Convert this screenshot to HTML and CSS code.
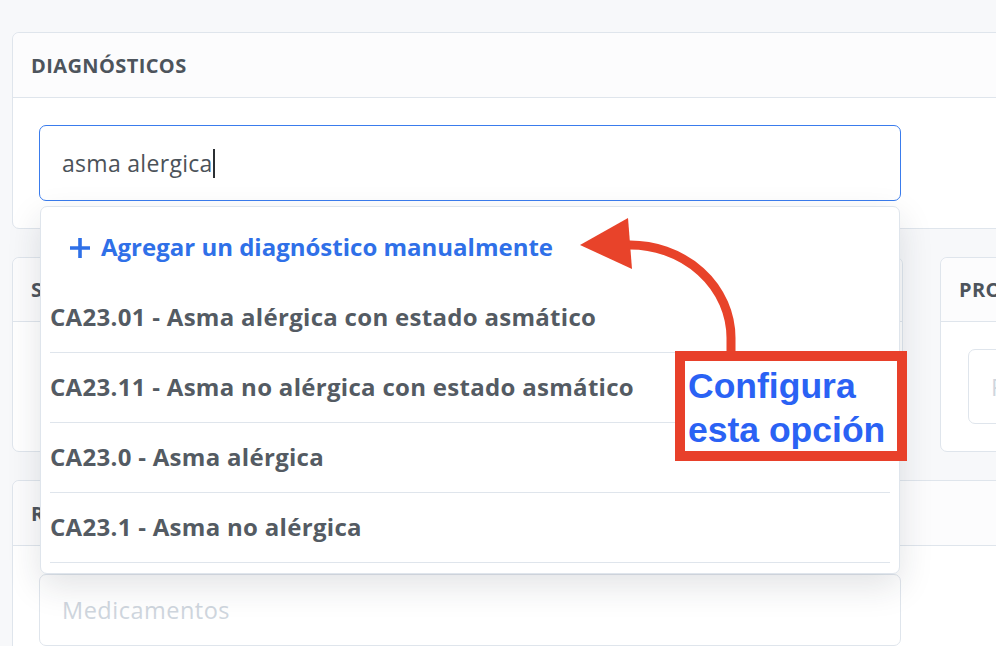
FILE: index.html
```html
<!DOCTYPE html>
<html lang="es">
<head>
<meta charset="utf-8">
<title>Diagnósticos</title>
<link rel="stylesheet" href="styles.css">
</head>
<body>
<div class="page">
  <section class="card card-diag">
    <header class="card-head">DIAGNÓSTICOS</header>
    <div class="card-body">
      <div class="search">
        <div class="field focused"><span class="typed">asma alergica</span><span class="caret"></span></div>
        <div class="dropdown">
          <div class="add-item">
            <svg class="plus" viewBox="0 0 22 22" width="22" height="22"><path d="M11 1V21M1 11H21" stroke="currentColor" stroke-width="3.6" fill="none"/></svg>
            <span>Agregar un diagnóstico manualmente</span>
          </div>
          <ul class="options">
            <li>CA23.01 - Asma alérgica con estado asmático</li>
            <li>CA23.11 - Asma no alérgica con estado asmático</li>
            <li>CA23.0 - Asma alérgica</li>
            <li>CA23.1 - Asma no alérgica</li>
          </ul>
        </div>
      </div>
    </div>
  </section>

  <div class="row-two">
    <section class="card card-sintomas">
      <header class="card-head">SÍNTOMAS</header>
      <div class="card-body"></div>
    </section>
    <section class="card card-proc">
      <header class="card-head">PROCEDIMIENTOS</header>
      <div class="card-body">
        <div class="field placeholder">Procedimientos</div>
      </div>
    </section>
  </div>

  <section class="card card-receta">
    <header class="card-head">RECETA</header>
    <div class="card-body">
      <div class="field area placeholder">Medicamentos</div>
    </div>
  </section>

  <svg class="arrow" viewBox="0 0 996 646" width="996" height="646">
    <path d="M731 352 V338 A101 93 0 0 0 628 245" stroke="#e8432a" stroke-width="9" fill="none"/>
    <polygon points="580,245 628,218 632,269" fill="#e8432a"/>
  </svg>
  <div class="callout">Configura<br>esta opción</div>
</div>
</body>
</html>
```

FILE: styles.css
```css
html, body {
  margin: 0;
  padding: 0;
  background: #f7f8fa;
  overflow: hidden;
}

.page {
  position: relative;
  width: 996px;
  height: 646px;
  overflow: hidden;
  padding: 32px 0 0 12px;
  box-sizing: border-box;
  font-family: "Open Sans", "Noto Sans", sans-serif;
  color: #525961;
}

.card {
  background: #ffffff;
  border: 1px solid #dfe5ec;
  border-radius: 7px;
  box-sizing: border-box;
  width: 1088px;
}

.card-head {
  height: 65px;
  display: flex;
  align-items: center;
  padding-left: 18px;
  background: #fcfcfd;
  border-bottom: 1px solid #dfe5ec;
  border-radius: 7px 7px 0 0;
  box-sizing: border-box;
  font-weight: 700;
  font-size: 20px;
  letter-spacing: 0.4px;
  color: #4d545c;
  white-space: nowrap;
}

.card-diag {
  height: 197px;
}

.card-diag .card-body {
  padding: 27px 26px;
}

.search {
  position: relative;
  width: 862px;
}

.field {
  height: 76px;
  border: 1px solid #dfe5ec;
  border-radius: 7px;
  box-sizing: border-box;
  display: flex;
  align-items: center;
  padding-left: 22px;
  font-size: 23px;
  letter-spacing: 0.3px;
  background: #ffffff;
  white-space: nowrap;
}

.field.focused {
  border-color: #3a7ced;
  color: #4b5259;
}

.caret {
  display: inline-block;
  width: 2px;
  height: 29px;
  background: #2b2f33;
  margin-left: 0;
}

.placeholder {
  color: #cfd6de;
  letter-spacing: 0.5px;
  font-size: 23.5px;
}

.dropdown {
  position: absolute;
  z-index: 10;
  top: calc(100% + 5px);
  left: 1px;
  right: 1px;
  background: #ffffff;
  border: 1px solid #dfe5ec;
  border-radius: 7px;
  box-shadow: 0 12px 34px rgba(30, 40, 55, 0.13);
  padding: 0 9px 10px 9px;
}

.add-item {
  height: 76px;
  display: flex;
  align-items: center;
  gap: 10px;
  padding: 3px 0 0 19px;
  box-sizing: border-box;
  color: #2f70e8;
  font-weight: 700;
  font-size: 24px;
}

.plus {
  flex: none;
  margin-top: 2px;
}

.options {
  list-style: none;
  margin: 0;
  padding: 0;
}

.options li {
  height: 70px;
  display: flex;
  align-items: center;
  border-bottom: 1px solid #dfe5ec;
  box-sizing: border-box;
  padding-bottom: 3px;
  font-weight: 700;
  font-size: 24px;
  letter-spacing: 0.3px;
  color: #545b63;
  white-space: nowrap;
}

.row-two {
  display: grid;
  grid-template-columns: 891px 220px;
  gap: 37px;
  margin-top: 28px;
}

.row-two .card {
  height: 195px;
  width: auto;
}

.row-two .card-head {
  height: 64px;
}

.card-proc .card-body {
  padding: 27px 27px;
}

.card-proc .field {
  height: 75px;
}

.card-receta {
  margin-top: 28px;
  height: 200px;
}

.card-receta .card-body {
  padding: 28px 26px;
}

.field.area {
  width: 862px;
  height: 72px;
}

.arrow {
  position: absolute;
  left: 0;
  top: 0;
  z-index: 20;
  pointer-events: none;
}

.callout {
  position: absolute;
  z-index: 21;
  left: 675px;
  top: 351px;
  width: 232px;
  height: 110px;
  box-sizing: border-box;
  border: 10px solid #e8402a;
  background: #ffffff;
  padding: 3px 0 0 3px;
  font-family: "Liberation Sans", Arial, sans-serif;
  font-weight: 700;
  font-size: 35.5px;
  line-height: 44px;
  color: #2a62f4;
  white-space: nowrap;
}
```
